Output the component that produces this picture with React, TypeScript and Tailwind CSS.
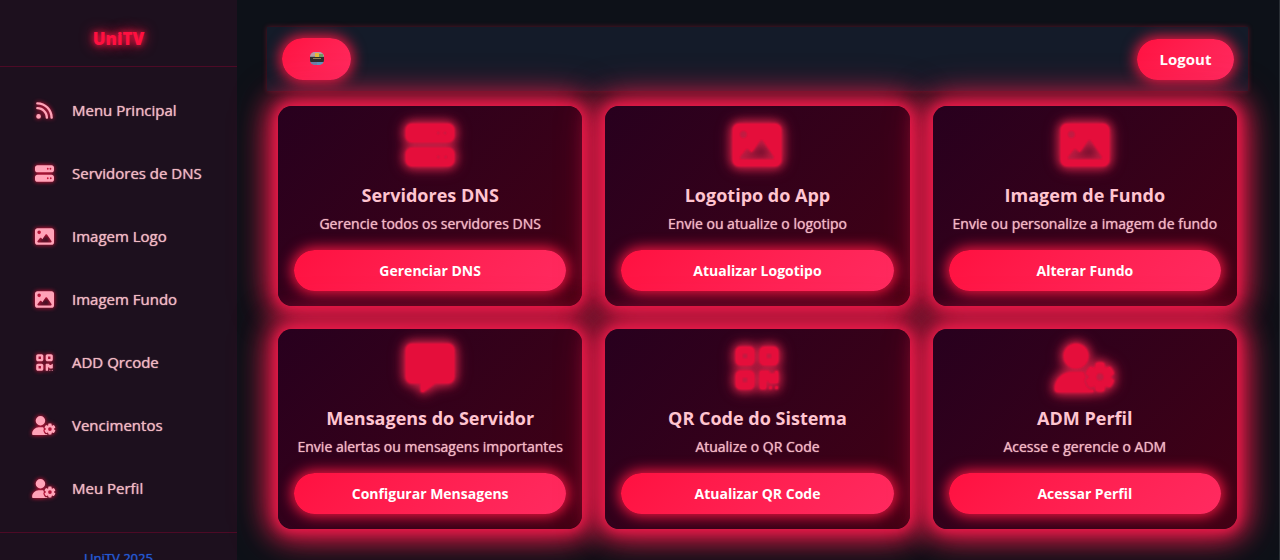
import type { IconType } from 'react-icons'
import { FaImage, FaMessage, FaQrcode, FaRss, FaServer, FaUserGear } from 'react-icons/fa6'

interface MenuItem {
  label: string
  icon: IconType
}

interface PanelCard {
  title: string
  text: string
  action: string
  icon: IconType
}

const menu: MenuItem[] = [
  { label: 'Menu Principal', icon: FaRss },
  { label: 'Servidores de DNS', icon: FaServer },
  { label: 'Imagem Logo', icon: FaImage },
  { label: 'Imagem Fundo', icon: FaImage },
  { label: 'ADD Qrcode', icon: FaQrcode },
  { label: 'Vencimentos', icon: FaUserGear },
  { label: 'Meu Perfil', icon: FaUserGear },
]

const cards: PanelCard[] = [
  { title: 'Servidores DNS', text: 'Gerencie todos os servidores DNS', action: 'Gerenciar DNS', icon: FaServer },
  { title: 'Logotipo do App', text: 'Envie ou atualize o logotipo', action: 'Atualizar Logotipo', icon: FaImage },
  { title: 'Imagem de Fundo', text: 'Envie ou personalize a imagem de fundo', action: 'Alterar Fundo', icon: FaImage },
  { title: 'Mensagens do Servidor', text: 'Envie alertas ou mensagens importantes', action: 'Configurar Mensagens', icon: FaMessage },
  { title: 'QR Code do Sistema', text: 'Atualize o QR Code', action: 'Atualizar QR Code', icon: FaQrcode },
  { title: 'ADM Perfil', text: 'Acesse e gerencie o ADM', action: 'Acessar Perfil', icon: FaUserGear },
]

const neonButton =
  'rounded-full bg-linear-135 from-[#ff1040] to-[#ff2a60] text-white shadow-[0_0_14px_2px_#ff1744] hover:brightness-110'

function Avatar() {
  return (
    <svg width="14" height="14" viewBox="0 0 14 14" aria-hidden="true">
      <clipPath id="avatar">
        <rect width="14" height="13" rx="5" />
      </clipPath>
      <g clipPath="url(#avatar)">
        <rect width="14" height="14" fill="#8a8f94" />
        <rect width="14" height="4" fill="#b79aa6" />
        <rect x="5" y="1" width="4" height="4" fill="#e2b93b" />
        <rect x="9" y="2" width="4" height="3" fill="#6f9b62" />
        <rect y="5" width="14" height="5" fill="#2a2c2d" />
        <rect x="3" y="6" width="8" height="1" fill="#8d8055" />
        <rect x="1" y="10" width="6" height="4" fill="#6d7fa8" />
        <rect x="7" y="10" width="6" height="4" fill="#5b92bd" />
      </g>
    </svg>
  )
}

function Sidebar() {
  return (
    <aside className="w-[237px] shrink-0 bg-[#1d101e]">
      <div className="flex h-[67px] items-center justify-center border-b border-[#4d0a26] pt-3">
        <span className="text-[17px] font-extrabold text-[#ff1040] [text-shadow:0_0_6px_#ff1744,0_0_14px_#ff1744]">
          UniTV
        </span>
      </div>
      <nav className="py-3">
        {menu.map(({ label, icon: Icon }) => (
          <a key={label} href="#" className="flex h-[63px] items-center pl-8 hover:bg-white/5">
            <span className="flex w-6 justify-center">
              <Icon
                className={`h-[19px] shrink-0 text-[#ffa3b8] drop-shadow-[0_0_2px_#ff1744] ${Icon === FaUserGear ? 'w-6' : 'w-[19px]'}`}
              />
            </span>
            <span className="ml-4 text-[15px] text-[#f0b8c2] [text-shadow:0_0_1px_#f0b8c2]">{label}</span>
          </a>
        ))}
      </nav>
      <footer className="border-t border-[#4d0a26] pt-3 text-center">
        <a href="#" className="text-[13px] text-[#2458d3] [text-shadow:0_0_1px_#2458d3]">
          UniTV 2025
        </a>
      </footer>
    </aside>
  )
}

export default function App() {
  return (
    <div className="flex min-h-screen bg-[#0d1118] font-['Open_Sans','Noto_Sans',sans-serif]">
      <Sidebar />
      <main className="min-w-0 flex-1 border-r border-[#2a2f35] pt-[27px] pr-[31px] pb-6 pl-[30px]">
        <header className="flex items-center justify-between bg-[#141b29] py-[11px] pr-[14px] pl-[15px] shadow-[0_0_5px_#ff174455]">
          <button aria-label="Menu" className={`flex h-[42px] w-[69px] items-center justify-center ${neonButton}`}>
            <Avatar />
          </button>
          <button className={`h-[41px] w-[97px] pt-px text-[15px] font-bold ${neonButton}`}>Logout</button>
        </header>

        <div className="mt-[15px] grid grid-cols-3 gap-[23px] px-[11px]">
          {cards.map(({ title, text, action, icon: Icon }) => (
            <section
              key={title}
              className="flex flex-col items-center rounded-[14px] bg-linear-135 from-[#28001e] to-[#420014] px-4 py-[15px] text-center shadow-[0_0_12px_2px_#ec1b4a,0_0_24px_10px_#ec1b4ab8,0_0_40px_4px_#ec1b4acc]"
            >
              <Icon
                className={`h-12 text-[#e50e3b] [filter:drop-shadow(0_0_1px_#e50e3b)_drop-shadow(0_0_1px_#e50e3b)_drop-shadow(0_0_4px_#c21e44)_drop-shadow(0_0_6px_#c21e44)] ${Icon === FaUserGear ? 'w-[60px]' : 'w-12'}`}
              />
              <h2 className="mt-3 text-lg leading-7 font-bold text-[#ffc4d0]">{title}</h2>
              <p className="mt-[5px] text-sm leading-5 whitespace-nowrap text-[#f2b6c3] [text-shadow:0_0_1px_#f2b6c3]">
                {text}
              </p>
              <button className={`mt-4 h-[41px] w-full text-sm font-bold ${neonButton}`}>{action}</button>
            </section>
          ))}
        </div>
      </main>
    </div>
  )
}
